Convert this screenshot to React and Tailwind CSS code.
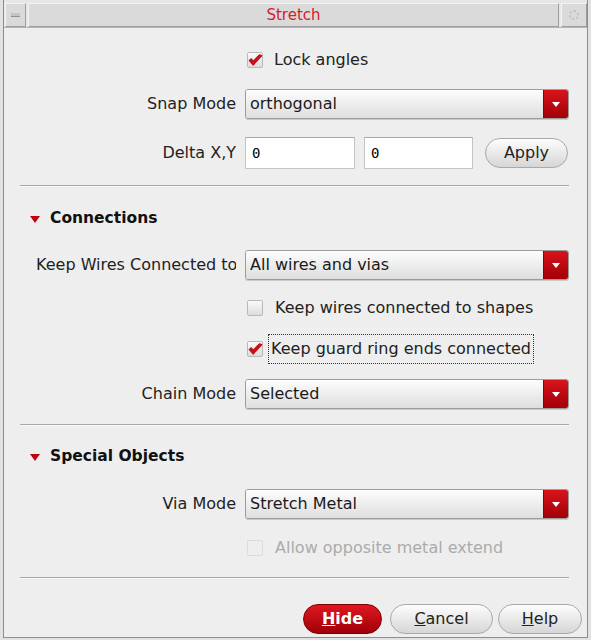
import React from "react";

const font = { fontFamily: '"DejaVu Sans", sans-serif' };

const Check = () => (
  <svg width="15" height="13" viewBox="0 0 15 13" className="absolute left-[0px] top-[1px]">
    <path d="M1.5 6.5 L5.2 10.8 L13.5 1.8 L11.5 1 L5.2 7.6 L3.2 5 Z" fill="#c8101a" stroke="#c8101a" strokeWidth="1.6" strokeLinejoin="round" />
  </svg>
);

const Checkbox = ({ checked, disabled }) => (
  <span
    className={`relative inline-block w-[16px] h-[16px] rounded-[2px] border ${
      disabled ? "border-[#dcdcdc] bg-[#eeeeee]" : "border-[#b9b9b9] bg-gradient-to-b from-[#fafafa] to-[#dcdcdc]"
    }`}
  >
    {checked && <Check />}
  </span>
);

const Select = ({ value }) => (
  <div className="flex h-[30px] w-[324px] rounded-[3px] border border-[#9c9c9c] overflow-hidden shadow-[0_1px_0_#c9c9c9]">
    <div className="flex-1 flex items-center pl-[4px] bg-gradient-to-b from-[#fdfdfd] to-[#dedede] text-[16px] text-[#1a1a1a]">
      {value}
    </div>
    <div className="w-[25px] flex items-center justify-center bg-gradient-to-b from-[#d8141c] to-[#a30008] border-l border-[#8a0006]">
      <svg width="8" height="5" viewBox="0 0 8 5">
        <path d="M0 0 H8 L4 5 Z" fill="#ffffff" />
      </svg>
    </div>
  </div>
);

const Label = ({ children }) => (
  <div className="w-[200px] ml-[16px] mr-[9px] text-right whitespace-nowrap overflow-hidden text-[16px] text-[#222]">
    {children}
  </div>
);

const Section = ({ title, className }) => (
  <div className={`flex items-center h-[22px] ${className}`}>
    <svg width="10" height="7" viewBox="0 0 10 7" className="ml-[10px] mr-[10px]">
      <path d="M0 0 H10 L5 7 Z" fill="#c00010" />
    </svg>
    <span className="font-bold text-[15.5px] text-[#111]">{title}</span>
  </div>
);

const Separator = ({ className }) => (
  <div className={`h-[1px] w-[549px] bg-[#a8a8a8] border-b border-[#f8f8f8] box-content ${className}`} />
);

const PillButton = ({ children, red, className }) => (
  <button
    className={`h-[30px] rounded-full text-[16px] ${
      red
        ? "bg-gradient-to-b from-[#e01820] to-[#a00008] border border-[#7a0004] text-white font-bold"
        : "bg-gradient-to-b from-[#fdfdfd] to-[#d6d6d6] border border-[#a9a9a9] text-[#222]"
    } ${className}`}
  >
    {children}
  </button>
);

export default function App() {
  return (
    <div className="w-[591px] h-[640px] bg-[#e2e2e2] pl-[3px] pr-[3px] pb-[2px]" style={font}>
      <div className="h-full border-l border-r border-b border-[#8d8d8d] bg-[#eeeeee] flex flex-col">
        {/* title bar */}
        <div className="h-[28px] pt-[3px] flex gap-[2px] bg-[#e6e6e6] border-b border-[#b5b5b5]">
          <div className="w-[21px] ml-[1px] flex items-center justify-center bg-[#dadada] border border-t-[#f4f4f4] border-l-[#f4f4f4] border-b-[#9e9e9e] border-r-[#9e9e9e]">
            <span className="block w-[9px] h-[4px] bg-[#c4c4c4] border-b border-[#909090]" />
          </div>
          <div className="flex-1 flex items-center justify-center bg-[#dadada] border border-t-[#f4f4f4] border-l-[#f4f4f4] border-b-[#9e9e9e] border-r-[#9e9e9e]">
            <span className="text-[15px] text-[#d4202a]">Stretch</span>
          </div>
          <div className="w-[26px] flex items-center justify-center bg-[#dadada] border border-t-[#f4f4f4] border-l-[#f4f4f4] border-b-[#9e9e9e] border-r-[#9e9e9e]">
            <span className="block w-[10px] h-[10px] rounded-full border-2 border-dotted border-[#c0c0c0]" />
          </div>
        </div>

        <div className="pl-[16px] flex flex-col">
          {/* lock angles */}
          <div className="mt-[21px] h-[22px] flex items-center pl-[227px]">
            <Checkbox checked />
            <span className="ml-[11px] text-[16px] text-[#222]">Lock angles</span>
          </div>

          <div className="mt-[18px] h-[30px] flex items-center">
            <Label>Snap Mode</Label>
            <Select value="orthogonal" />
          </div>

          <div className="mt-[18px] h-[32px] flex items-center">
            <Label>Delta X,Y</Label>
            <div
              className="w-[110px] h-[32px] bg-white border border-[#c4c4c4] border-t-[#a8a8a8] flex items-center pl-[6px] text-[14px]"
              style={{ fontFamily: '"DejaVu Sans Mono", monospace' }}
            >
              0
            </div>
            <div
              className="ml-[9px] w-[109px] h-[32px] bg-white border border-[#c4c4c4] border-t-[#a8a8a8] flex items-center pl-[6px] text-[14px]"
              style={{ fontFamily: '"DejaVu Sans Mono", monospace' }}
            >
              0
            </div>
            <PillButton className="ml-[12px] w-[83px] h-[28px]">Apply</PillButton>
          </div>

          <Separator className="mt-[16px]" />

          <Section title="Connections" className="mt-[21px]" />

          <div className="mt-[20px] h-[30px] flex items-center">
            <Label>
              <div className="text-left">Keep Wires Connected to</div>
            </Label>
            <Select value="All wires and vias" />
          </div>

          <div className="mt-[17px] h-[22px] flex items-center pl-[227px]">
            <Checkbox />
            <span className="ml-[12px] text-[16px] text-[#222]">Keep wires connected to shapes</span>
          </div>

          <div className="mt-[17px] h-[26px] flex items-center pl-[227px]">
            <Checkbox checked />
            <span className="ml-[5px] px-[2px] py-[2px] border border-dotted border-[#333] text-[16px] text-[#222]">
              Keep guard ring ends connected
            </span>
          </div>

          <div className="mt-[17px] h-[30px] flex items-center">
            <Label>Chain Mode</Label>
            <Select value="Selected" />
          </div>

          <Separator className="mt-[15px]" />

          <Section title="Special Objects" className="mt-[20px]" />

          <div className="mt-[21px] h-[30px] flex items-center">
            <Label>Via Mode</Label>
            <Select value="Stretch Metal" />
          </div>

          <div className="mt-[18px] h-[22px] flex items-center pl-[227px]">
            <Checkbox disabled />
            <span className="ml-[12px] text-[16px] text-[#ababab]">Allow opposite metal extend</span>
          </div>

          <Separator className="mt-[18px]" />

          <div className="mt-[25px] flex items-center">
            <PillButton red className="ml-[283px] w-[79px]">
              <span className="underline">H</span>ide
            </PillButton>
            <PillButton className="ml-[8px] w-[103px]">
              <span className="underline">C</span>ancel
            </PillButton>
            <PillButton className="ml-[5px] w-[84px]">
              <span className="underline">H</span>elp
            </PillButton>
          </div>
        </div>
      </div>
    </div>
  );
}
